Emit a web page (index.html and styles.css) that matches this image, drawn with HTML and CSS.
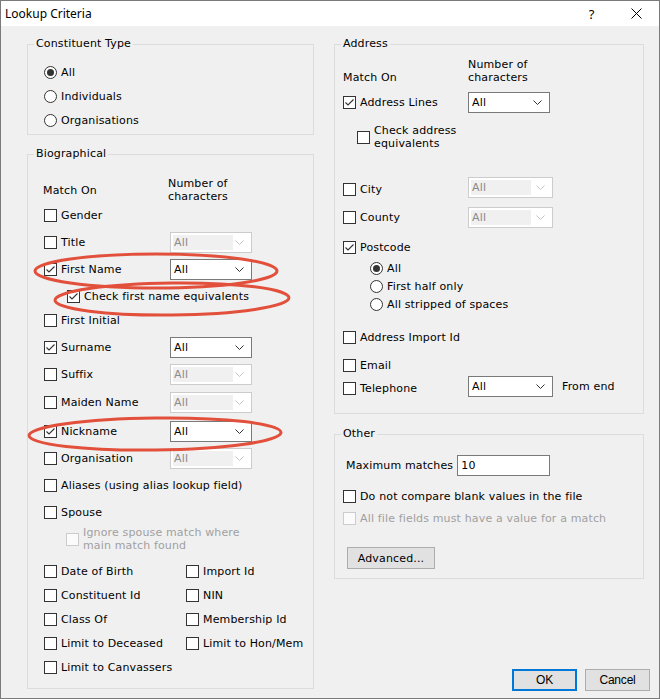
FILE: index.html
```html
<!DOCTYPE html>
<html>
<head>
<meta charset="utf-8">
<link rel="stylesheet" href="styles.css">
</head>
<body>
<div class="window">
  <div class="titlebar">
    <span class="title">Lookup Criteria</span>
    <span class="tbtn help">?</span>
    <span class="tbtn close"><svg width="11" height="11" viewBox="0 0 11 11"><path d="M0.5 0.5L10.5 10.5M10.5 0.5L0.5 10.5" stroke="#000" stroke-width="1" fill="none"/></svg></span>
  </div>
  <div class="client">
    <div class="col col-left">
      <fieldset class="grp grp-ctype">
        <legend>Constituent Type</legend>
        <div class="radios">
          <div class="opt"><span class="rb on"></span>All</div>
          <div class="opt"><span class="rb"></span>Individuals</div>
          <div class="opt"><span class="rb"></span>Organisations</div>
        </div>
      </fieldset>

      <fieldset class="grp grp-bio">
        <legend>Biographical</legend>
        <div class="hdr hdr-bio"><span>Match On</span><span>Number of<br>characters</span></div>
        <div class="list">
          <div class="opt mt2"><span class="cb"></span>Gender</div>
          <div class="frow"><div class="opt"><span class="cb"></span>Title</div><div class="combo dis"><span class="val">All</span><svg class="chev" width="9" height="5" viewBox="0 0 9 5"><path d="M0.5 0.5L4.5 4.5L8.5 0.5" stroke="#c4c4c4" fill="none"/></svg></div></div>
          <div class="frow"><div class="opt"><span class="cb on"><svg width="11" height="11" viewBox="0 0 11 11"><path d="M1.5 5.5L4 8L9.5 2.5" stroke="#333" stroke-width="1.1" fill="none"/></svg></span>First Name</div><div class="combo"><span class="val">All</span><svg class="chev" width="9" height="5" viewBox="0 0 9 5"><path d="M0.5 0.5L4.5 4.5L8.5 0.5" stroke="#333" fill="none"/></svg></div></div>
          <div class="opt ind23"><span class="cb on"><svg width="11" height="11" viewBox="0 0 11 11"><path d="M1.5 5.5L4 8L9.5 2.5" stroke="#333" stroke-width="1.1" fill="none"/></svg></span>Check first name equivalents</div>
          <div class="opt mt3"><span class="cb"></span>First Initial</div>
          <div class="frow"><div class="opt"><span class="cb on"><svg width="11" height="11" viewBox="0 0 11 11"><path d="M1.5 5.5L4 8L9.5 2.5" stroke="#333" stroke-width="1.1" fill="none"/></svg></span>Surname</div><div class="combo"><span class="val">All</span><svg class="chev" width="9" height="5" viewBox="0 0 9 5"><path d="M0.5 0.5L4.5 4.5L8.5 0.5" stroke="#333" fill="none"/></svg></div></div>
          <div class="frow"><div class="opt"><span class="cb"></span>Suffix</div><div class="combo dis"><span class="val">All</span><svg class="chev" width="9" height="5" viewBox="0 0 9 5"><path d="M0.5 0.5L4.5 4.5L8.5 0.5" stroke="#c4c4c4" fill="none"/></svg></div></div>
          <div class="frow mt7"><div class="opt"><span class="cb"></span>Maiden Name</div><div class="combo dis"><span class="val">All</span><svg class="chev" width="9" height="5" viewBox="0 0 9 5"><path d="M0.5 0.5L4.5 4.5L8.5 0.5" stroke="#c4c4c4" fill="none"/></svg></div></div>
          <div class="frow mt8"><div class="opt"><span class="cb on"><svg width="11" height="11" viewBox="0 0 11 11"><path d="M1.5 5.5L4 8L9.5 2.5" stroke="#333" stroke-width="1.1" fill="none"/></svg></span>Nickname</div><div class="combo"><span class="val">All</span><svg class="chev" width="9" height="5" viewBox="0 0 9 5"><path d="M0.5 0.5L4.5 4.5L8.5 0.5" stroke="#333" fill="none"/></svg></div></div>
          <div class="frow"><div class="opt"><span class="cb"></span>Organisation</div><div class="combo dis"><span class="val">All</span><svg class="chev" width="9" height="5" viewBox="0 0 9 5"><path d="M0.5 0.5L4.5 4.5L8.5 0.5" stroke="#c4c4c4" fill="none"/></svg></div></div>
          <div class="opt"><span class="cb"></span>Aliases (using alias lookup field)</div>
          <div class="opt"><span class="cb"></span>Spouse</div>
          <div class="opt opt2 ind22 mt2 disabled"><span class="cb dis"></span><span>Ignore spouse match where<br>main match found</span></div>
          <div class="pairs">
            <div class="opt"><span class="cb"></span>Date of Birth</div>
            <div class="opt"><span class="cb"></span>Import Id</div>
            <div class="opt"><span class="cb"></span>Constituent Id</div>
            <div class="opt"><span class="cb"></span>NIN</div>
            <div class="opt"><span class="cb"></span>Class Of</div>
            <div class="opt"><span class="cb"></span>Membership Id</div>
            <div class="opt"><span class="cb"></span>Limit to Deceased</div>
            <div class="opt"><span class="cb"></span>Limit to Hon/Mem</div>
            <div class="opt"><span class="cb"></span>Limit to Canvassers</div>
          </div>
        </div>
      </fieldset>
    </div>

    <div class="col col-right">
      <fieldset class="grp grp-addr">
        <legend>Address</legend>
        <div class="hdr hdr-addr"><span>Match On</span><span>Number of<br>characters</span></div>
        <div class="arow a-lines"><div class="opt"><span class="cb on"><svg width="11" height="11" viewBox="0 0 11 11"><path d="M1.5 5.5L4 8L9.5 2.5" stroke="#333" stroke-width="1.1" fill="none"/></svg></span>Address Lines</div><div class="combo w82"><span class="val">All</span><svg class="chev" width="9" height="5" viewBox="0 0 9 5"><path d="M0.5 0.5L4.5 4.5L8.5 0.5" stroke="#333" fill="none"/></svg></div></div>
        <div class="opt opt2 ind14 a-equiv"><span class="cb"></span><span>Check address<br>equivalents</span></div>
        <div class="arow a-city"><div class="opt"><span class="cb"></span>City</div><div class="combo dis"><span class="val">All</span><svg class="chev" width="9" height="5" viewBox="0 0 9 5"><path d="M0.5 0.5L4.5 4.5L8.5 0.5" stroke="#c4c4c4" fill="none"/></svg></div></div>
        <div class="arow a-county"><div class="opt"><span class="cb"></span>County</div><div class="combo dis"><span class="val">All</span><svg class="chev" width="9" height="5" viewBox="0 0 9 5"><path d="M0.5 0.5L4.5 4.5L8.5 0.5" stroke="#c4c4c4" fill="none"/></svg></div></div>
        <div class="opt a-post"><span class="cb on"><svg width="11" height="11" viewBox="0 0 11 11"><path d="M1.5 5.5L4 8L9.5 2.5" stroke="#333" stroke-width="1.1" fill="none"/></svg></span>Postcode</div>
        <div class="postradios">
          <div class="opt"><span class="rb on"></span>All</div>
          <div class="opt"><span class="rb"></span>First half only</div>
          <div class="opt"><span class="rb"></span>All stripped of spaces</div>
        </div>
        <div class="opt a-import"><span class="cb"></span>Address Import Id</div>
        <div class="opt a-email"><span class="cb"></span>Email</div>
        <div class="arow a-tel"><div class="opt"><span class="cb"></span>Telephone</div><div class="combo"><span class="val">All</span><svg class="chev" width="9" height="5" viewBox="0 0 9 5"><path d="M0.5 0.5L4.5 4.5L8.5 0.5" stroke="#333" fill="none"/></svg></div><span class="fromend">From end</span></div>
      </fieldset>

      <fieldset class="grp grp-other">
        <legend>Other</legend>
        <div class="maxrow"><span>Maximum matches</span><span class="textbox">10</span></div>
        <div class="opt o-blank"><span class="cb"></span>Do not compare blank values in the file</div>
        <div class="opt o-all disabled"><span class="cb dis"></span>All file fields must have a value for a match</div>
        <button class="btn adv">Advanced...</button>
      </fieldset>

      <div class="btnrow">
        <button class="btn dlg ok">OK</button>
        <button class="btn dlg">Cancel</button>
      </div>
    </div>
  </div>

  <svg class="marks" width="660" height="699" viewBox="0 0 660 699">
    <ellipse cx="156" cy="271" rx="121" ry="17" />
    <ellipse cx="172" cy="299" rx="117" ry="16" transform="rotate(-0.6 172 299)" />
    <ellipse cx="155" cy="434" rx="126" ry="16" transform="rotate(-0.7 155 434)" />
  </svg>
</div>
</body>
</html>
```

FILE: styles.css
```css
* { box-sizing: border-box; }

body {
  margin: 0;
  background: #f0f0f0;
  font-family: "DejaVu Sans", Verdana, sans-serif;
  font-size: 11px;
  letter-spacing: 0.15px;
  color: #000;
}

.window {
  position: relative;
  width: 660px;
  height: 699px;
  border: 1px solid #7a7a7a;
  background: #f0f0f0;
  display: flex;
  flex-direction: column;
  overflow: hidden;
}

.titlebar {
  height: 25px;
  flex: none;
  background: #fff;
  display: flex;
  align-items: center;
  padding-left: 4px;
  font-family: "Noto Sans", "Open Sans", sans-serif;
  font-size: 12px;
  letter-spacing: 0;
}
.title { flex: 1; }
.tbtn {
  width: 45px;
  height: 25px;
  display: flex;
  align-items: center;
  justify-content: center;
}
.help { font-size: 13px; padding-top: 1px; }

.client {
  flex: 1;
  display: flex;
  gap: 20px;
  padding: 11px 15px 7px 26px;
}
.col { display: flex; flex-direction: column; }
.col-left { width: 287px; }
.col-right { width: 310px; }

/* group boxes */
.grp {
  margin: 0;
  min-width: 0;
  border: 1px solid #dcdcdc;
}
.grp legend {
  padding: 0 2px;
  line-height: 14px;
}
.grp-ctype { padding: 11px 16px 3px; }
.grp-ctype legend, .grp-bio legend { margin-left: -10px; }
.grp-bio { margin-top: 12px; padding: 16px 16px 10px; }
.grp-addr { padding: 7px 8px 16px; }
.grp-other { margin-top: 13px; padding: 14px 8px 9px; }
.grp-addr legend, .grp-other legend { margin-left: -2px; }

/* options */
.opt {
  display: flex;
  align-items: center;
  gap: 4px;
  height: 21px;
  line-height: 13px;
  white-space: nowrap;
}
.opt2 { height: 28px; }
.disabled { color: #a0a0a0; }

.cb {
  width: 13px;
  height: 13px;
  flex: none;
  border: 1px solid #333;
  background: #fff;
  display: block;
}
.cb svg { display: block; }
.cb.dis { border-color: #cccccc; background: #fbfbfb; }

.rb {
  width: 13px;
  height: 13px;
  flex: none;
  border: 1px solid #333;
  border-radius: 50%;
  background: #fff;
  position: relative;
}
.rb.on::after {
  content: "";
  position: absolute;
  left: 2px;
  top: 2px;
  width: 7px;
  height: 7px;
  border-radius: 50%;
  background: #333;
}

.radios { display: flex; flex-direction: column; gap: 3px; }

/* headers */
.hdr {
  display: grid;
  grid-template-columns: 125px 1fr;
  height: 26px;
  line-height: 13px;
}
.hdr-bio { align-items: center; margin-left: -1px; }
.hdr-addr { align-items: end; }

/* biographical list */
.list { display: flex; flex-direction: column; }
.list > * + * { margin-top: 6px; }
.list > .mt2 { margin-top: 2px; }
.list > .mt3 { margin-top: 3px; }
.list > .mt7 { margin-top: 7px; }
.list > .mt8 { margin-top: 8px; }
.ind22 { padding-left: 22px; }
.ind23 { padding-left: 23px; }
.ind14 { padding-left: 14px; }

.frow {
  display: grid;
  grid-template-columns: 126px 82px;
  align-items: center;
  height: 21px;
}

.list > .pairs {
  margin-top: 8px;
  display: grid;
  grid-template-columns: 142px 1fr;
  grid-auto-rows: 21px;
  row-gap: 3px;
}

/* combos */
.combo {
  position: relative;
  height: 21px;
  border: 1px solid #7a7a7a;
  background: #fff;
  display: flex;
  align-items: center;
  padding-left: 2px;
}
.combo .val { padding-left: 1px; }
.combo .chev {
  position: absolute;
  right: 7px;
  top: 7px;
}
.combo.dis { border-color: #cccccc; }
.combo.dis .val {
  width: 60px;
  height: 15px;
  line-height: 15px;
  background: #f0f0f0;
  color: #8a8a8a;
}

/* address */
.arow {
  display: grid;
  grid-template-columns: 125px 85px auto;
  align-items: center;
  height: 21px;
}
.w82 { width: 82px; }
.a-lines { margin-top: 8px; }
.a-equiv { margin-top: 10px; align-items: center; }
.a-city { margin-top: 26px; }
.a-city .opt { padding-top: 3px; }
.a-county { margin-top: 9px; }
.a-post { margin-top: 9px; }
.postradios {
  margin-top: 1px;
  padding-left: 27px;
  display: flex;
  flex-direction: column;
}
.postradios .opt { height: 18px; }
.a-import { margin-top: 14px; }
.a-email { margin-top: 7px; }
.fromend { padding-left: 9px; }
.a-tel .opt { padding-top: 3px; }

/* other */
.maxrow {
  display: flex;
  align-items: center;
  gap: 4px;
  height: 21px;
  padding-left: 3px;
}
.textbox {
  width: 93px;
  height: 21px;
  border: 1px solid #7a7a7a;
  background: #fff;
  padding-left: 3px;
  line-height: 19px;
}
.o-blank { margin-top: 10px; }
.o-all { margin-top: 1px; }

.btn {
  font-family: "DejaVu Sans", Verdana, sans-serif;
  font-size: 11px;
  letter-spacing: 0.15px;
  color: #000;
  background: #e1e1e1;
  border: 1px solid #adadad;
  padding: 0;
  margin: 0;
  height: 22px;
}
.adv {
  width: 88px;
  margin-top: 18px;
  margin-left: 4px;
  align-self: flex-start;
  display: block;
}

.btnrow {
  margin-top: auto;
  margin-right: -6px;
  display: flex;
  justify-content: flex-end;
  gap: 8px;
}
.dlg {
  width: 65px;
  font-family: "Liberation Sans", Arial, sans-serif;
  font-size: 12px;
  letter-spacing: -0.2px;
}
.ok { border: 2px solid #0078d7; }

/* annotation marks */
.marks {
  position: absolute;
  left: -1px;
  top: -1px;
  pointer-events: none;
}
.marks ellipse {
  fill: none;
  stroke: #e2503c;
  stroke-width: 3;
}
```
